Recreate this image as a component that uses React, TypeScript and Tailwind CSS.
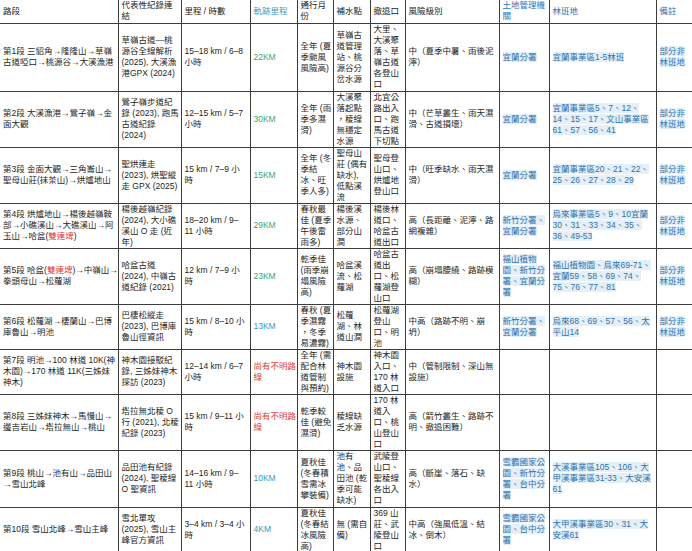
import React from 'react';

// 每格是一組「行」；用明確換行以貼近原圖的斷行
type Kind = 'text' | 'km' | 'kmb' | 'warn' | 'link';

type Row = {
  h: string;
  cells: string[][];
  km: Kind;
};

const cols = [
  'w-[118px]', 'w-[63px]', 'w-[69px]', 'w-[47px]', 'w-[36px]', 'w-[37px]',
  'w-[35px]', 'w-[94px]', 'w-[50px]', 'w-[107px]', 'w-[36px]',
];

const header: { t: string[]; c: string }[] = [
  { t: ['路段'], c: 'text-[#222]' },
  { t: ['代表性紀錄連', '結'], c: 'text-[#222]' },
  { t: ['里程 / 時數'], c: 'text-[#222]' },
  { t: ['軌跡里程'], c: 'text-[#3b9cc0]' },
  { t: ['通行月', '份'], c: 'text-[#222]' },
  { t: ['補水點'], c: 'text-[#222]' },
  { t: ['撤退口'], c: 'text-[#222]' },
  { t: ['風險級別'], c: 'text-[#222]' },
  { t: ['土地管理機', '關'], c: 'text-[#2f72ad]' },
  { t: ['林班地'], c: 'text-[#2f72ad]' },
  { t: ['備註'], c: 'text-[#2f72ad]' },
];

const rows: Row[] = [
  {
    h: 'h-[68px]', km: 'km',
    cells: [
      ['第1段 三貂角→隆隆山→草嶺', '古道啞口→桃源谷→大溪漁港'],
      ['草嶺古道—桃', '源谷全線解析', '(2025), 大溪漁', '港GPX (2024)'],
      ['15–18 km / 6–8', '小時'],
      ['22KM'],
      ['全年 (夏', '季颱風', '風險高)'],
      ['草嶺古', '道管理', '站、桃', '源谷分', '岔水源'],
      ['大里、', '大溪聚', '落、草', '嶺古道', '各登山', '口'],
      ['中（夏季中暑、雨後泥', '濘）'],
      ['宜蘭分署'],
      ['宜蘭事業區1-5林班'],
      ['部分非', '林班地'],
    ],
  },
  {
    h: 'h-[56px]', km: 'km',
    cells: [
      ['第2段 大溪漁港→鶯子嶺→金', '面大觀'],
      ['鶯子嶺步道紀', '錄 (2023), 跑馬', '古道紀錄', '(2024)'],
      ['12–15 km / 5–7', '小時'],
      ['30KM'],
      ['全年 (雨', '季多濕', '滑)'],
      ['大溪聚', '落起點', '，稜線', '無穩定', '水源'],
      ['北宜公', '路出入', '口、跑', '馬古道', '下切點'],
      ['中（芒草叢生、雨天濕', '滑、古道損壞）'],
      ['宜蘭分署'],
      ['宜蘭事業區5、7、12、', '14、15、17、文山事業區', '61、57、56、41'],
      ['部分非', '林班地'],
    ],
  },
  {
    h: 'h-[55px]', km: 'km',
    cells: [
      ['第3段 金面大觀→三角崙山→', '聖母山莊(抹茶山)→烘爐地山'],
      ['聖烘連走', '(2023), 烘聖縱', '走 GPX (2025)'],
      ['15 km / 7–9 小', '時'],
      ['15KM'],
      ['全年 (冬', '季結', '冰、旺', '季人多)'],
      ['聖母山', '莊 (偶有', '缺水),', '低點溪', '流'],
      ['聖母登', '山口、', '烘爐地', '登山口'],
      ['中（旺季缺水、雨天濕', '滑）'],
      ['宜蘭分署'],
      ['宜蘭事業區20、21、22、', '25、26、27、28、29'],
      ['部分非', '林班地'],
    ],
  },
  {
    h: 'h-[45px]', km: 'km',
    cells: [
      ['第4段 烘爐地山→楊後越嶺鞍', '部→小礁溪山→大礁溪山→阿', '玉山→哈盆(雙連埤)'],
      ['楊後越嶺紀錄', '(2024), 大小礁', '溪山 O 走 (近', '年)'],
      ['18–20 km / 9–', '11 小時'],
      ['29KM'],
      ['春秋最', '佳 (夏季', '午後雷', '雨多)'],
      ['楊後溪', '水源、', '部分山', '澗'],
      ['楊後林', '道口、', '哈盆古', '道出口'],
      ['高（長距離、泥濘、路', '網複雜）'],
      ['新竹分署、', '宜蘭分署'],
      ['烏來事業區5、9、10宜蘭', '30、31、33、34、35、', '36、49-53'],
      ['部分非', '林班地'],
    ],
  },
  {
    h: 'h-[56px]', km: 'km',
    cells: [
      ['第5段 哈盆(雙連埤)→中嶺山→', '拳頭母山→松蘿湖'],
      ['哈盆古道', '(2024), 中嶺古', '道紀錄 (2021)'],
      ['12 km / 7–9 小', '時'],
      ['23KM'],
      ['乾季佳', '(雨季崩', '塌風險', '高)'],
      ['哈盆溪', '流、松', '蘿湖'],
      ['哈盆古', '道出', '口、松', '蘿湖登', '山口'],
      ['高（崩塌腰繞、路跡模', '糊）'],
      ['福山植物', '園、新竹分', '署、宜蘭分', '署'],
      ['福山植物園、烏來69-71、', '宜蘭59、58、69、74、', '75、76、77、81'],
      ['部分非', '林班地'],
    ],
  },
  {
    h: 'h-[45px]', km: 'kmb',
    cells: [
      ['第6段 松蘿湖→棲蘭山→巴博', '庫魯山→明池'],
      ['巴棲松縱走', '(2023), 巴博庫', '魯山徑資訊'],
      ['15 km / 8–10 小', '時'],
      ['13KM'],
      ['春秋 (夏', '季濕霧', '，冬季', '易濃霧)'],
      ['松蘿', '湖、林', '道山澗'],
      ['松蘿湖', '登山', '口、明', '池'],
      ['中高（路跡不明、崩', '坍）'],
      ['新竹分署、', '宜蘭分署'],
      ['烏來68、69、57、56、太', '平山14'],
      ['部分非', '林班地'],
    ],
  },
  {
    h: 'h-[45px]', km: 'warn',
    cells: [
      ['第7段 明池→100 林道 10K(神', '木園)→170 林道 11K(三姊妹', '神木)'],
      ['神木園接駁紀', '錄, 三姊妹神木', '探訪 (2023)'],
      ['12–14 km / 6–7', '小時'],
      ['尚有不明路', '線'],
      ['全年 (需', '配合林', '道管制', '與預約)'],
      ['神木園', '設施'],
      ['神木園', '入口、', '170 林', '道入口'],
      ['中（管制限制、深山無', '設施）'],
      [],
      [],
      [],
    ],
  },
  {
    h: 'h-[56px]', km: 'warn',
    cells: [
      ['第8段 三姊妹神木→馬慢山→', '邊吉岩山→塔拉無山→桃山'],
      ['塔拉無北稜 O', '行 (2021), 北稜', '紀錄 (2023)'],
      ['15 km / 9–11 小', '時'],
      ['尚有不明路', '線'],
      ['乾季較', '佳 (避免', '濕滑)'],
      ['稜線缺', '乏水源'],
      ['170 林', '道入', '口、桃', '山登山', '口'],
      ['高（箭竹叢生、路跡不', '明、撤退困難）'],
      [],
      [],
      [],
    ],
  },
  {
    h: 'h-[57px]', km: 'kmb',
    cells: [
      ['第9段 桃山→池有山→品田山', '→雪山北峰'],
      ['品田池有紀錄', '(2024), 聖稜線', 'O 聖資訊'],
      ['14–16 km / 9–', '11 小時'],
      ['10KM'],
      ['夏秋佳', '(冬春積', '雪需冰', '攀裝備)'],
      ['池有', '池、品', '田池 (乾', '季可能', '缺水)'],
      ['武陵登', '山口、', '聖稜線', '各出入', '口'],
      ['高（斷崖、落石、缺', '水）'],
      ['雪霸國家公', '園、新竹分', '署、台中分', '署'],
      ['大溪事業區105、106、大', '甲溪事業區31-33、大安溪', '61'],
      [],
    ],
  },
  {
    h: 'h-[44px]', km: 'kmb',
    cells: [
      ['第10段 雪山北峰→雪山主峰'],
      ['雪北單攻', '(2025), 雪山主', '峰官方資訊'],
      ['3–4 km / 3–4 小', '時'],
      ['4KM'],
      ['夏秋佳', '(冬春結', '冰風險', '高)'],
      ['無 (需自', '備)'],
      ['369 山', '莊、武', '陵登山', '口'],
      ['中高（強風低溫、結', '冰、倒木）'],
      ['雪霸國家公', '園、台中分', '署'],
      ['大甲溪事業區30、31、大', '安溪61'],
      [],
    ],
  },
];

// 路段裡的 (雙連埤) 標紅
const rich = (line: string) =>
  line.split(/(雙連埤)/).map((part, i) =>
    part === '雙連埤' ? (
      <span key={i} className="text-[#e0403a]">{part}</span>
    ) : (
      <React.Fragment key={i}>{part}</React.Fragment>
    )
  );

const kmColor: Record<string, string> = {
  km: 'text-[#3fa66a]',
  kmb: 'text-[#3a97bd]',
  warn: 'text-[#e0403a]',
};

const cellKind = (col: number, row: Row): Kind => {
  if (col === 3) return row.km;
  if (col >= 8) return 'link';
  return 'text';
};

const Cell = ({ lines, kind, col }: { lines: string[]; kind: Kind; col: number }) => {
  const edge = `${col === 0 ? 'border-l-0' : ''} ${col === 10 ? 'border-r-0' : ''}`;
  return (
    <td className={`border border-[#3c3c3c] px-[3px] py-0 align-middle ${edge}`}>
      {lines.map((l, i) => (
        <div key={i} className="whitespace-nowrap">
          {kind === 'link' ? (
            <span className="bg-[#e4eff8] text-[#2f72ad]">{l}</span>
          ) : kind === 'text' ? (
            <span className="text-[#1e1e1e]">{rich(l)}</span>
          ) : (
            <span className={kmColor[kind]}>{l}</span>
          )}
        </div>
      ))}
    </td>
  );
};

export default function App() {
  return (
    <div className="w-[692px] h-[551px] overflow-hidden bg-white">
      <table
        className="table-fixed border-collapse w-[692px] text-[8.5px] leading-[11px]"
        style={{ fontFamily: '"Liberation Sans", "Noto Sans CJK TC", sans-serif' }}
      >
        <colgroup>
          {cols.map((c, i) => (
            <col key={i} className={c} />
          ))}
        </colgroup>
        <thead>
          <tr className="h-[23px]">
            {header.map((h, i) => (
              <th
                key={i}
                className={`border border-[#3c3c3c] border-t-0 px-[3px] py-0 text-left font-normal align-middle ${h.c} ${i === 0 ? 'border-l-0' : ''} ${i === 10 ? 'border-r-0' : ''}`}
              >
                {h.t.map((l, j) => (
                  <div key={j} className="whitespace-nowrap">{l}</div>
                ))}
              </th>
            ))}
          </tr>
        </thead>
        <tbody>
          {rows.map((r, ri) => (
            <tr key={ri} className={r.h}>
              {r.cells.map((lines, ci) => (
                <Cell key={ci} lines={lines} kind={cellKind(ci, r)} col={ci} />
              ))}
            </tr>
          ))}
        </tbody>
      </table>
    </div>
  );
}
